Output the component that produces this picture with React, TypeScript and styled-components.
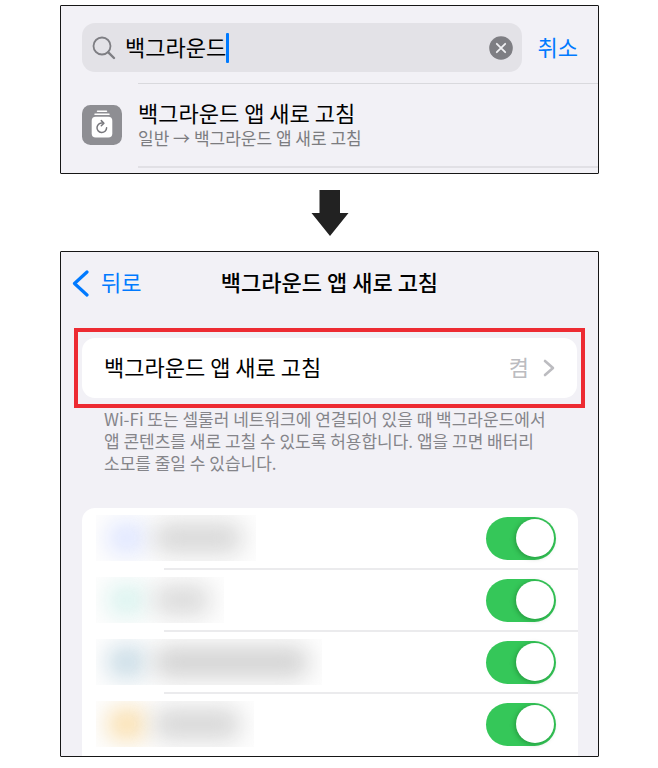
import React, { useState } from "react";
import styled, { createGlobalStyle } from "styled-components";

const GlobalStyle = createGlobalStyle`
  *, *::before, *::after { box-sizing: border-box; }
  body {
    margin: 0;
    background: #fff;
    color: #000;
    font-family: "Noto Sans CJK KR", "Noto Sans", sans-serif;
    font-size: 22px;
    line-height: 30px;
  }
  button, input { font: inherit; color: inherit; }
  h1, h2, p, ul { margin: 0; padding: 0; font: inherit; }
`;

const Page = styled.main`
  display: flex;
  flex-direction: column;
  align-items: stretch;
  padding: 5px 59px 11px 60px;
`;

const Panel = styled.section`
  overflow: hidden;
  border: 1px solid #161616;
  border-radius: 1px;
  background: #f2f1f6;
`;

const SearchRow = styled.div`
  display: flex;
  align-items: center;
  gap: 16px;
  padding: 17px 20px 11px 21px;
`;

const SearchField = styled.label`
  display: flex;
  flex: 1;
  align-items: center;
  min-width: 0;
  height: 49px;
  padding: 0 9px 0 10px;
  border-radius: 13px;
  background: #e3e2e7;
`;

const SearchInput = styled.input`
  field-sizing: content;
  min-width: 0;
  margin-left: 9px;
  padding: 0 0 4px;
  border: 0;
  outline: 0;
  background: transparent;
`;

const Caret = styled.span`
  width: 3px;
  height: 30px;
  border-radius: 1px;
  background: #007aff;
`;

const PlainButton = styled.button`
  display: flex;
  align-items: center;
  padding: 0;
  border: 0;
  background: transparent;
  cursor: pointer;
`;

const ButtonText = styled.span`
  padding-bottom: 4px;
`;

const ClearButton = styled(PlainButton)`
  margin-left: auto;
`;

const LinkButton = styled(PlainButton)`
  gap: 12px;
  color: #007aff;
`;

const Result = styled.a`
  display: flex;
  gap: 16px;
  padding-left: 21px;
  color: inherit;
  text-decoration: none;
`;

const ResultIcon = styled.svg`
  flex: none;
  margin-top: 22px;
`;

const ResultText = styled.div`
  flex: 1;
  height: 85px;
  padding-top: 13px;
  border-top: 1px solid #d9d9dd;
  border-bottom: 2px solid #e1e0e5;
`;

const ResultPath = styled.p`
  color: #7c7c80;
  font-size: 17px;
  line-height: 22px;
`;

const SearchPanel = styled(Panel)`
  padding-bottom: 5px;
`;

const DownArrow = styled.svg`
  align-self: center;
  margin: 16px 0 15px;
`;

const NavBar = styled.header`
  display: grid;
  grid-template-columns: 1fr auto 1fr;
  align-items: center;
  height: 62px;
  padding: 0 11px;
`;

const NavTitle = styled.h1`
  padding-bottom: 4px;
  font-weight: 500;
`;

const Highlight = styled.div`
  margin: 14px 13px 0;
  padding: 6px 4px;
  border: 4px solid #ed2b32;
`;

const SettingButton = styled(PlainButton)`
  width: 100%;
  height: 60px;
  padding: 0 22px;
  border-radius: 13px;
  background: #fff;
`;

const SettingValue = styled(ButtonText)`
  margin-left: auto;
  margin-right: 14px;
  color: #bcbcc0;
`;

const Description = styled.p`
  padding: 0 43px;
  color: #85858a;
  font-size: 17px;
  line-height: 22px;
  word-break: keep-all;
`;

const AppList = styled.ul`
  margin: 34px 20px 0 21px;
  border-radius: 13px 13px 0 0;
  background: #fff;
  list-style: none;
`;

const AppRow = styled.li`
  display: flex;
  align-items: center;
  justify-content: space-between;
  height: 62px;
  padding: 0 22px 2px 14px;
  background: linear-gradient(#ebebed, #ebebed) right bottom / calc(100% - 82px) 2px no-repeat;

  &:last-child { background: none; }
`;

const Redacted = styled.div<{ $width: number }>`
  display: flex;
  gap: 8px;
  width: ${(p) => p.$width}px;
  height: 46px;
  padding: 7px 14px 7px 12px;
  overflow: hidden;
  background: #fdfdfd;
`;

const Smudge = styled.span<{ $color: string; $wide?: boolean }>`
  flex: ${(p) => (p.$wide ? "1" : "0 0 38px")};
  border-radius: 12px;
  background: ${(p) => p.$color};
  filter: blur(11px);
`;

const Switch = styled.input`
  appearance: none;
  display: flex;
  align-items: center;
  width: 70px;
  height: 43px;
  margin: 0;
  padding: 0 2px;
  border-radius: 22px;
  background: #e4e4e8;
  cursor: pointer;

  &::before {
    content: "";
    width: 38px;
    height: 38px;
    border-radius: 50%;
    background: #fff;
    box-shadow: -1px 1px 5px rgba(0, 60, 10, 0.35);
  }

  &:checked {
    justify-content: flex-end;
    background: #35c759;
  }
`;

const apps = [
  { name: "앱 1", width: 160, icon: "#dfe6ff", text: "#d9d9d9" },
  { name: "앱 2", width: 128, icon: "#daf3ef", text: "#dcdcdc" },
  { name: "앱 3", width: 226, icon: "#c9dce6", text: "#d4d4d4" },
  { name: "앱 4", width: 158, icon: "#fae0b0", text: "#d8d8d8" },
];

function AppItem({ app }: { app: (typeof apps)[number] }) {
  const [on, setOn] = useState(true);
  return (
    <AppRow>
      <Redacted $width={app.width}>
        <Smudge $color={app.icon} />
        <Smudge $color={app.text} $wide />
      </Redacted>
      <Switch
        type="checkbox"
        role="switch"
        aria-label={app.name}
        checked={on}
        onChange={(e) => setOn(e.target.checked)}
      />
    </AppRow>
  );
}

export default function App() {
  const [query, setQuery] = useState("백그라운드");
  return (
    <>
      <GlobalStyle />
      <Page>
        <SearchPanel>
          <SearchRow>
            <SearchField>
              <svg width="24" height="24" viewBox="0 0 24 24" fill="none" stroke="#7e7e83" strokeLinecap="round">
                <circle cx="10" cy="10" r="8.5" strokeWidth="1.8" />
                <path d="M16.3 16.3L22 22" strokeWidth="2.4" />
              </svg>
              <SearchInput aria-label="검색" value={query} onChange={(e) => setQuery(e.target.value)} />
              <Caret />
              <ClearButton type="button" aria-label="지우기" onClick={() => setQuery("")}>
                <svg width="24" height="24" viewBox="0 0 24 24">
                  <circle cx="12" cy="12" r="11.8" fill="#7e7e83" />
                  <path d="M7.8 7.8l8.4 8.4M16.2 7.8l-8.4 8.4" stroke="#f0f0f3" strokeWidth="1.8" strokeLinecap="round" />
                </svg>
              </ClearButton>
            </SearchField>
            <LinkButton type="button">
              <ButtonText>취소</ButtonText>
            </LinkButton>
          </SearchRow>
          <Result href="#background-refresh">
            <ResultIcon width="40" height="40" viewBox="0 0 40 40">
              <rect width="40" height="40" rx="8.5" fill="#8e8e93" />
              <path d="M15.5 6.2h9M13 9.3h14" stroke="#fff" strokeWidth="1.5" strokeLinecap="round" />
              <rect x="9.7" y="11.8" width="20.6" height="20.8" rx="4" fill="#fff" />
              <g fill="none" stroke="#77777c" strokeWidth="1.5" strokeLinecap="round" strokeLinejoin="round">
                <path d="M20.8 18.1A4.8 4.8 0 1 0 24.6 22.8" />
                <path d="M19.3 15.6l2.6 2.6-2.6 2.5" />
              </g>
            </ResultIcon>
            <ResultText>
              <h2>백그라운드 앱 새로 고침</h2>
              <ResultPath>일반 → 백그라운드 앱 새로 고침</ResultPath>
            </ResultText>
          </Result>
        </SearchPanel>

        <DownArrow width="38" height="46" viewBox="0 0 38 46" aria-hidden="true">
          <path d="M8.5 0H29v23h8.5L19 46 .5 23h8z" fill="#222" />
        </DownArrow>

        <Panel id="background-refresh">
          <NavBar>
            <LinkButton type="button">
              <svg width="17" height="27" viewBox="0 0 17 27" fill="none" stroke="#007aff">
                <path d="M15 2L2.5 13.5 15 25" strokeWidth="3.2" strokeLinecap="round" strokeLinejoin="round" />
              </svg>
              <ButtonText>뒤로</ButtonText>
            </LinkButton>
            <NavTitle>백그라운드 앱 새로 고침</NavTitle>
          </NavBar>
          <Highlight>
            <SettingButton type="button">
              <ButtonText>백그라운드 앱 새로 고침</ButtonText>
              <SettingValue>켬</SettingValue>
              <svg width="12" height="18" viewBox="0 0 12 18" fill="none" stroke="#bcbcc0">
                <path d="M2 2l8 7-8 7" strokeWidth="2.6" strokeLinecap="round" strokeLinejoin="round" />
              </svg>
            </SettingButton>
          </Highlight>
          <Description>
            Wi-Fi 또는 셀룰러 네트워크에 연결되어 있을 때 백그라운드에서 앱 콘텐츠를 새로 고칠 수 있도록 허용합니다. 앱을
            끄면 배터리 소모를 줄일 수 있습니다.
          </Description>
          <AppList>
            {apps.map((app) => (
              <AppItem key={app.name} app={app} />
            ))}
          </AppList>
        </Panel>
      </Page>
    </>
  );
}
